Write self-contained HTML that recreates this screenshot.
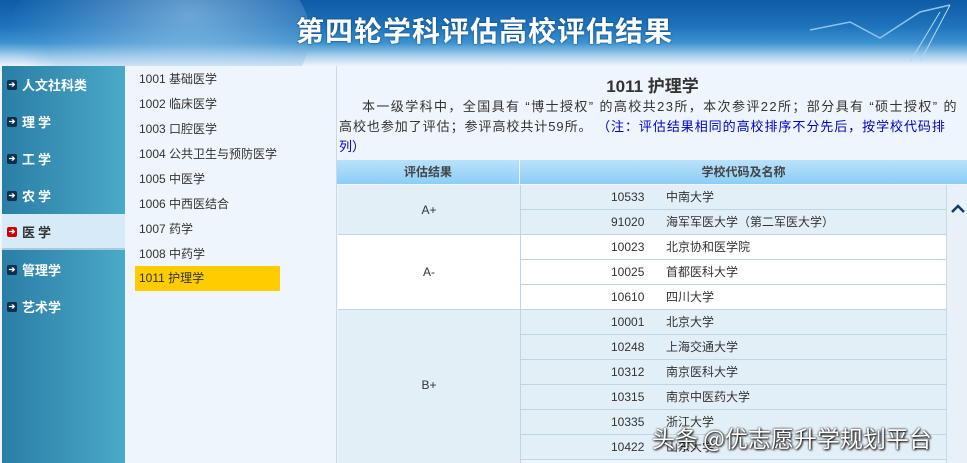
<!DOCTYPE html>
<html><head><meta charset="utf-8"><style>
*{margin:0;padding:0;box-sizing:border-box}
body{width:967px;height:463px;overflow:hidden;background:#eef5fc;font-family:"Liberation Sans","Noto Sans CJK SC",sans-serif;position:relative}
.hdr{position:absolute;left:0;top:0;width:967px;height:66px;background:linear-gradient(180deg,#0e5aa6 0%,#1e74bb 40%,#3c92cf 65%,#a9d2ee 85%,#eef5fc 100%)}
.globe{position:absolute;left:10px;top:-60px;width:300px;height:190px;border-radius:50%;background:radial-gradient(ellipse at 60% 40%,rgba(180,215,240,.55),rgba(80,150,210,.2) 60%,transparent 72%)}
.title{position:absolute;left:296px;top:10px;font-size:28px;font-weight:bold;color:#fff;letter-spacing:1px;font-family:"Noto Sans CJK SC",sans-serif;text-shadow:0 0 2px #0a3d7a}
.nav{position:absolute;left:2px;top:66px;width:123px;height:397px;background:linear-gradient(90deg,#2a7ea6,#4aa9c8)}
.nav div{position:absolute;left:0;width:123px;height:36px;line-height:36px;color:#fff;font-weight:bold;font-size:13px;padding-left:20px;font-family:"Noto Sans CJK SC",sans-serif}
.nav div:before{content:"➔";position:absolute;left:5px;top:13px;width:10px;height:10px;border-radius:2px;background:#0d2f4e;color:#fff;font-size:8px;line-height:10px;text-align:center}
.nav div.on{background:#d6ebf7;color:#333;border-bottom:2px solid #a9c9dc}
.nav div.on:before{background:#c00}
.sub{position:absolute;left:125px;top:66px;width:210px;height:397px;background:#eef5fc}
.sub div{position:absolute;left:10px;width:145px;height:25px;line-height:25px;font-size:12px;color:#333;padding-left:4px}
.sub div.on{background:#ffcc00}
.main{position:absolute;left:336px;top:66px;width:631px;height:397px;background:#eef5fc;border-left:1px solid #c9d9e6}
h1{position:absolute;left:0;width:631px;top:6px;text-align:center;font-size:17px;font-weight:bold;color:#333}
.p{position:absolute;left:2px;top:31px;width:640px;font-size:13px;line-height:20px;color:#333;white-space:nowrap;font-family:"Liberation Sans","Noto Sans CJK SC",sans-serif}
.p span{color:#00c}
.th{position:absolute;top:160px;height:24px;line-height:24px;background:linear-gradient(#b9e2fb,#8ccdf5);font-size:12px;font-weight:bold;color:#444;text-align:center}
.cell{position:absolute;font-size:12px;color:#333;text-align:center}
.row{position:absolute;left:521px;width:425px;height:25px;line-height:25px;font-size:12px;color:#333;border-bottom:1px solid #bdd5e4}
.row b{font-weight:normal;position:absolute;left:90px}
.row i{font-style:normal;position:absolute;left:145px}
.sb{position:absolute;left:946px;top:185px;width:21px;height:278px;background:#e8f1f8;border-left:1px solid #c9d9e6}
.wm{position:absolute;left:652px;top:420px;font-size:23px;color:#fff;font-family:"Noto Sans CJK SC",sans-serif;text-shadow:0 0 2px #000,1px 1px 2px #000}
</style></head><body>
<div class="hdr"><div class="globe"></div>
<svg style="position:absolute;left:800px;top:0" width="167" height="66"><polyline points="10,30 50,22 80,38 120,12 150,5" fill="none" stroke="#8fc3ea" stroke-width="1.5"/><line x1="120" y1="62" x2="150" y2="5" stroke="#b5d8f0"/><line x1="110" y1="62" x2="140" y2="12" stroke="#b5d8f0"/></svg>
<div class="title">第四轮学科评估高校评估结果</div></div>
<div class="nav">
<div style="top:1px">人文社科类</div><div style="top:38px">理 学</div><div style="top:75px">工 学</div><div style="top:112px">农 学</div><div class="on" style="top:148px">医 学</div><div style="top:186px">管理学</div><div style="top:223px">艺术学</div>
</div>
<div class="sub">
<div style="top:1px">1001 基础医学</div><div style="top:26px">1002 临床医学</div><div style="top:51px">1003 口腔医学</div><div style="top:76px">1004 公共卫生与预防医学</div><div style="top:101px">1005 中医学</div><div style="top:126px">1006 中西医结合</div><div style="top:151px">1007 药学</div><div style="top:176px">1008 中药学</div><div class="on" style="top:200px">1011 护理学</div>
</div>
<div class="main">
<h1>1011 护理学</h1>
<div class="p"><span style="color:#333;margin-left:23px;letter-spacing:1.4px">本一级学科中，全国具有 “博士授权” 的高校共23所，本次参评22所；部分具有 “硕士授权” 的</span><br><span style="color:#333;letter-spacing:0.95px">高校也参加了评估；参评高校共计59所。</span><span style="letter-spacing:0.95px"> （注：评估结果相同的高校排序不分先后，按学校代码排</span><br><span>列）</span></div>
</div>
<div class="th" style="left:337px;width:182px">评估结果</div>
<div class="th" style="left:520px;width:447px">学校代码及名称</div>
<div class="cell" style="left:338px;top:185px;width:182px;height:50px;line-height:50px;background:#e3eff6;border-bottom:1px solid #bdd5e4">A+</div>
<div class="cell" style="left:338px;top:235px;width:182px;height:75px;line-height:75px;background:#fff;border-bottom:1px solid #bdd5e4">A-</div>
<div class="cell" style="left:338px;top:310px;width:182px;height:153px;line-height:150px;background:#e3eff6">B+</div>
<div style="position:absolute;left:520px;top:185px;width:1px;height:278px;background:#bdd5e4"></div>
<div class="row" style="top:185px;background:#e3eff6"><b>10533</b><i>中南大学</i></div>
<div class="row" style="top:210px;background:#e3eff6"><b>91020</b><i>海军军医大学（第二军医大学）</i></div>
<div class="row" style="top:235px;background:#fff"><b>10023</b><i>北京协和医学院</i></div>
<div class="row" style="top:260px;background:#fff"><b>10025</b><i>首都医科大学</i></div>
<div class="row" style="top:285px;background:#fff"><b>10610</b><i>四川大学</i></div>
<div class="row" style="top:310px;background:#e3eff6"><b>10001</b><i>北京大学</i></div>
<div class="row" style="top:335px;background:#e3eff6"><b>10248</b><i>上海交通大学</i></div>
<div class="row" style="top:360px;background:#e3eff6"><b>10312</b><i>南京医科大学</i></div>
<div class="row" style="top:385px;background:#e3eff6"><b>10315</b><i>南京中医药大学</i></div>
<div class="row" style="top:410px;background:#e3eff6"><b>10335</b><i>浙江大学</i></div>
<div class="row" style="top:435px;background:#e3eff6"><b>10422</b><i>山东大学</i></div>
<div class="sb"><svg width="20" height="20" style="position:absolute;left:1px;top:14px"><polyline points="4,13 10,7 16,13" fill="none" stroke="#0b3d75" stroke-width="2.5"/></svg></div>
<div class="wm">头条 @优志愿升学规划平台</div>
</body></html>
